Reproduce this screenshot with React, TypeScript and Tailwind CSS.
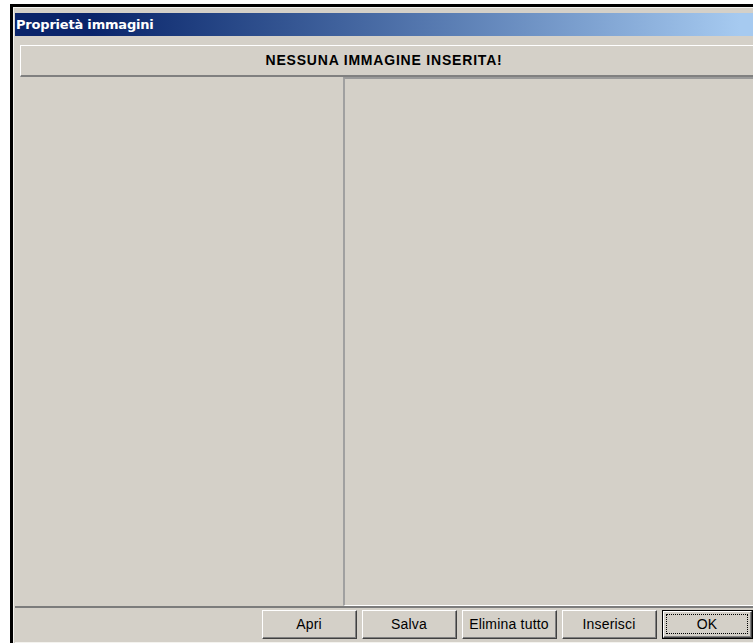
export default function App() {
  const buttons = ["Apri", "Salva", "Elimina tutto", "Inserisci"];

  return (
    <div className="h-[643px] w-[753px] overflow-hidden bg-white pl-[10px] pt-[4px]">
      {/* window frame */}
      <div className="flex h-[639px] w-[760px] flex-col border-l-[3px] border-t-[3px] border-black bg-[#d4d0c8]">
        <div className="flex flex-1 flex-col border-l border-t border-[#f4f3ef] pl-[1px] pt-[5px]">
          {/* title bar */}
          <div className="flex h-[23px] items-center bg-gradient-to-r from-[#0a246a] from-10% to-[#a6caf0] to-[96%] pl-[1px] font-['DejaVu_Sans',sans-serif] text-[13px] font-bold tracking-[-0.2px] text-white">
            Proprietà immagini
          </div>

          <div className="flex flex-1 flex-col pt-[9px]">
            {/* header */}
            <div className="ml-[5px] mr-[9px] flex h-[32px] items-center justify-center border-b-2 border-l border-r-2 border-t border-b-[#808080] border-l-white border-r-[#808080] border-t-white pr-[12px] font-['Liberation_Sans',sans-serif] text-[14px] font-bold tracking-[0.8px] text-black">
              NESSUNA IMMAGINE INSERITA!
            </div>

            {/* panels */}
            <div className="flex flex-1">
              <div className="w-[328px] shrink-0" />
              <div className="flex-1 border-b border-l-2 border-t-2 border-b-white border-l-[#a0a0a0] border-t-[#9a9a9a]" />
            </div>

            {/* button bar */}
            <div className="flex h-[37px] items-start gap-[5px] border-b border-t-2 border-b-[#f4f3ef] border-t-[#7c7c7c] pl-[247px] pt-[2px] font-['Liberation_Sans',sans-serif] text-[14px] tracking-[0.2px] text-black">
              {buttons.map((label) => (
                <button
                  key={label}
                  className="h-[29px] w-[95px] border border-b-[#404040] border-l-white border-r-[#404040] border-t-white"
                >
                  <div className="flex h-full w-full items-center justify-center border-b border-r border-b-[#808080] border-r-[#808080]">
                    {label}
                  </div>
                </button>
              ))}
              <button className="h-[29px] w-[91px] border border-black">
                <div className="h-full w-full border border-b-[#404040] border-l-white border-r-[#404040] border-t-white">
                  <div className="flex h-full w-full items-center justify-center border-b border-r border-b-[#808080] border-r-[#808080] p-[2px]">
                    <div className="flex h-full w-full items-center justify-center border border-dotted border-black">
                      OK
                    </div>
                  </div>
                </div>
              </button>
            </div>
          </div>
        </div>
      </div>
    </div>
  );
}
